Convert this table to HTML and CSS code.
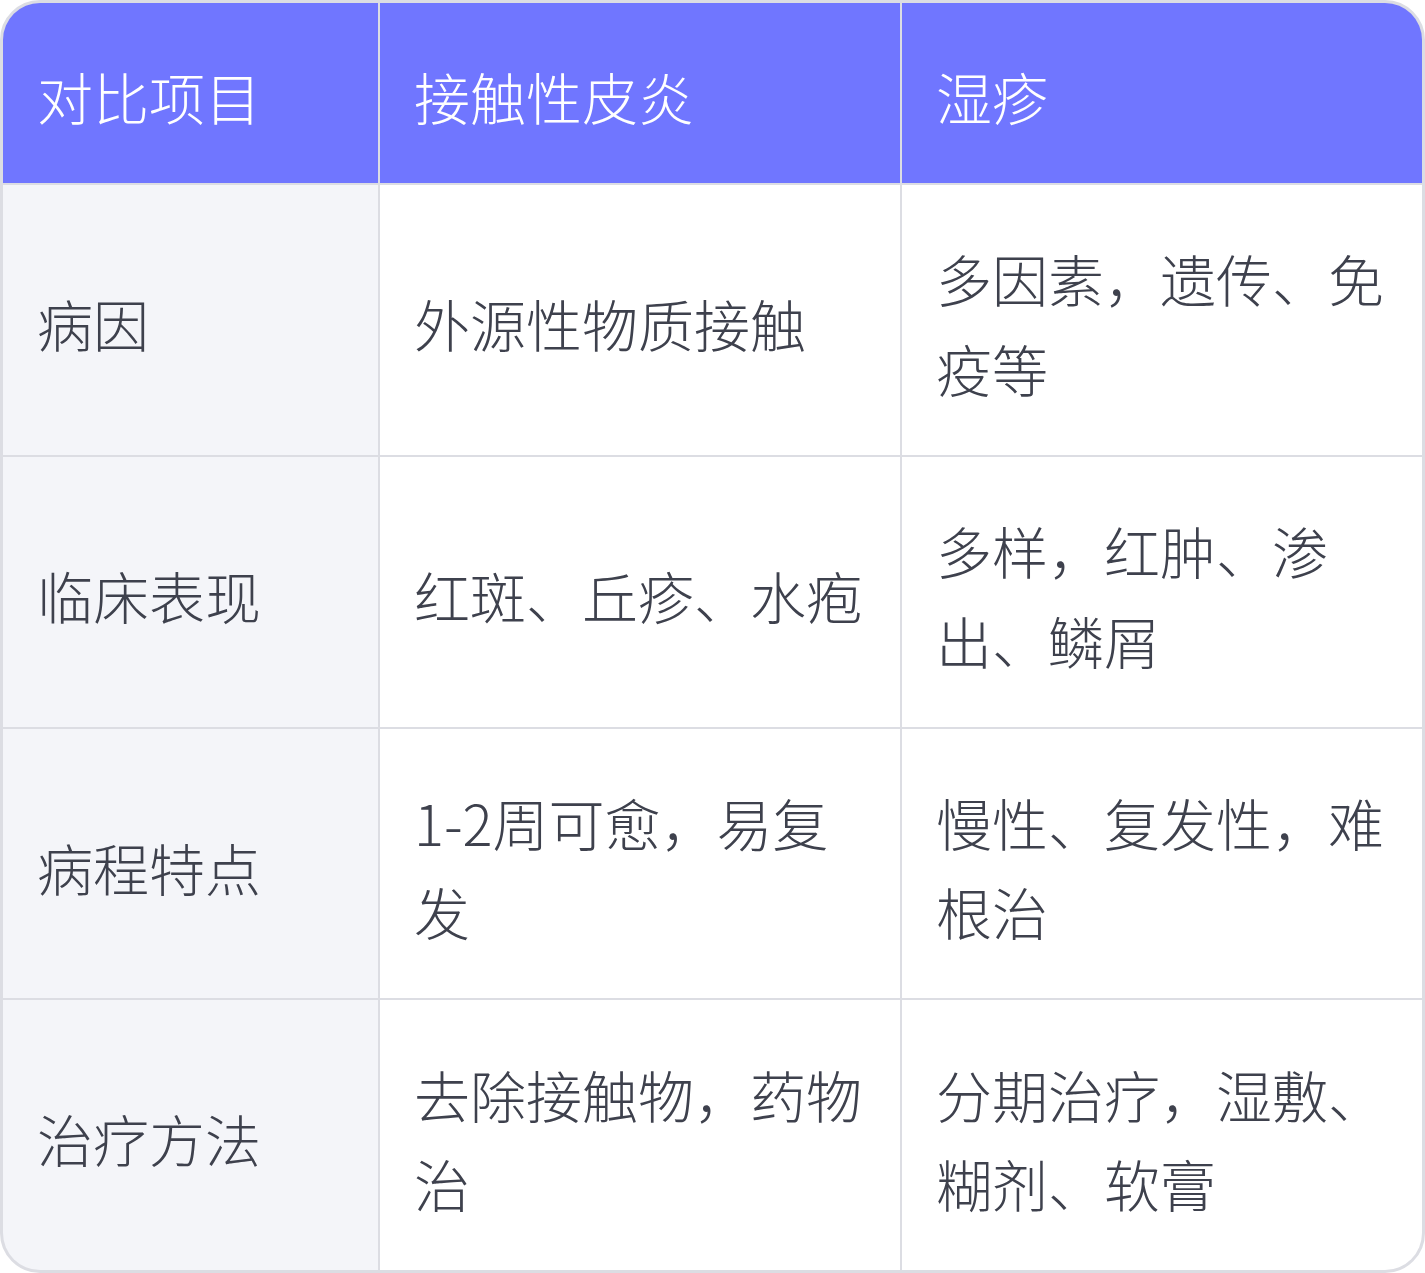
FILE: index.html
```html
<!DOCTYPE html>
<html lang="zh-CN">
<head>
<meta charset="utf-8">
<title>接触性皮炎与湿疹对比</title>
<link rel="stylesheet" href="styles.css">
</head>
<body>
<div class="table">
  <div class="cell head">对比项目</div>
  <div class="cell head">接触性皮炎</div>
  <div class="cell head">湿疹</div>

  <div class="cell label">病因</div>
  <div class="cell">外源性物质接触</div>
  <div class="cell">多因素，遗传、免疫等</div>

  <div class="cell label">临床表现</div>
  <div class="cell">红斑、丘疹、水疱</div>
  <div class="cell">多样，红肿、渗出、鳞屑</div>

  <div class="cell label">病程特点</div>
  <div class="cell">1-2周可愈，易复发</div>
  <div class="cell">慢性、复发性，难根治</div>

  <div class="cell label">治疗方法</div>
  <div class="cell">去除接触物，药物治</div>
  <div class="cell">分期治疗，湿敷、糊剂、软膏</div>
</div>
</body>
</html>
```
FILE: styles.css
```css
html, body {
  margin: 0;
  padding: 0;
  background: #ffffff;
}

.table {
  box-sizing: border-box;
  width: 1425px;
  height: 1273px;
  display: grid;
  grid-template-columns: 375px 520px 520px;
  grid-template-rows: 180px 1fr 1fr 1fr 1fr;
  gap: 2px;
  background: #dcdde3;
  border: 3px solid #dcdde3;
  border-radius: 40px;
  overflow: hidden;
  font-family: "Noto Sans CJK SC", "Noto Sans", sans-serif;
  font-weight: 300;
  font-size: 56px;
  line-height: 89.6px;
  color: #3e414d;
}

.cell {
  display: flex;
  align-items: center;
  padding: 6px 30px 0 34px;
  background: #ffffff;
}

.head {
  background: #7076ff;
  color: #ffffff;
}

.label {
  background: #f4f5f9;
}
```
